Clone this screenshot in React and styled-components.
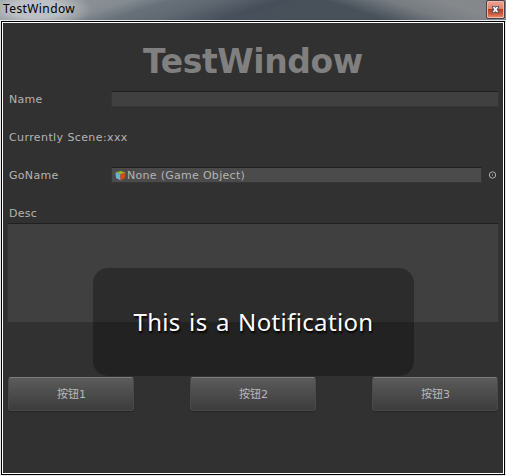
import React from 'react';
import styled, { createGlobalStyle } from 'styled-components';

const GlobalStyle = createGlobalStyle`
  * { box-sizing: border-box; }
  body { margin: 0; overflow: hidden; }
`;

const Window = styled.div`
  width: 506px;
  height: 476px;
  display: flex;
  flex-direction: column;
  background: #e4e7ec;
  font: 11px/16px "DejaVu Sans", "Noto Sans CJK SC", sans-serif;
  color: #b4b4b4;
`;

const TitleBar = styled.header`
  height: 20px;
  flex: none;
  display: flex;
  justify-content: space-between;
  background:
    radial-gradient(ellipse 56px 20px at 36px 9px, rgba(205, 208, 211, 0.75) 45%, rgba(170, 175, 180, 0) 100%),
    linear-gradient(162deg, #949a9f 0%, #858b91 23%, #68717a 30%, #606972 38%, #464f59 50%, rgba(70, 79, 89, 0) 54%),
    linear-gradient(18deg, #464f59 0%, #48515a 68%, #777c81 79%, #85898c 88%, #83878b 100%);
`;

const WindowName = styled.span`
  padding-left: 3px;
  font: 12px/18px "Noto Sans", sans-serif;
  letter-spacing: 0.4px;
  color: #000;
`;

const CloseButton = styled.button`
  width: 19px;
  height: 19px;
  margin-right: 1px;
  padding: 0;
  display: flex;
  align-items: center;
  justify-content: center;
  border: 1px solid #48424a;
  border-radius: 2px;
  box-shadow: inset 0 0 0 1px #f0b5a5;
  background: linear-gradient(#f0a594 0%, #df8069 47%, #bd3d20 50%, #ca583b 75%, #e99577 100%);
`;

const Frame = styled.div`
  flex: none;
  height: 454px;
  margin: 1px 1px 0;
  border: 1px solid #000;
`;

const Panel = styled.main`
  position: relative;
  height: 452px;
  padding: 0 4px;
  display: flex;
  flex-direction: column;
  border: 1px solid #fff;
  background: #313131;
`;

const Heading = styled.h1`
  margin: 19px 0 9px;
  height: 40px;
  font: bold 33px/40px "DejaVu Sans", sans-serif;
  letter-spacing: -0.4px;
  text-align: center;
  color: #808080;
`;

const Row = styled.div`
  height: 16px;
  margin-bottom: 22px;
  padding-left: 1px;
  display: flex;
  align-items: center;
  white-space: nowrap;
`;

const Label = styled.span`
  width: ${({ $wide }) => ($wide ? 'auto' : '103px')};
  padding: 2px 0 0 1px;
  letter-spacing: ${({ $spacing = 0.3 }) => $spacing}px;
`;

const Field = styled.div`
  flex: 1;
  height: 16px;
  display: flex;
  align-items: center;
  gap: 1px;
  padding-left: 3px;
  border: 1px solid #363636;
  border-top-color: #202020;
  background: ${({ $object }) => ($object ? '#4b4b4b' : '#404040')};
`;

const FieldText = styled.span`
  padding-top: 2px;
  letter-spacing: 0.29px;
`;

const Picker = styled.span`
  width: 17px;
  display: flex;
  justify-content: flex-end;
  padding-right: 2px;
`;

const TextArea = styled.div`
  flex: none;
  height: 99px;
  margin-top: -20px;
  border: 1px solid #363636;
  border-top-color: #202020;
  border-bottom-color: #404040;
  background: #404040;
`;

const Buttons = styled.div`
  display: flex;
  justify-content: space-between;
  margin-top: 55px;
  padding: 0 1px;
`;

const Button = styled.button`
  width: 126px;
  height: 34px;
  padding: 1px 0 0 1px;
  border: 1px solid #4b4b4b;
  border-top-color: #7c7c7c;
  border-bottom-color: #494949;
  border-radius: 3px;
  background: linear-gradient(#5b5b5b, #3c3c3c);
  box-shadow: 0 1px 1px #252525;
  font: 11px/16px "DejaVu Sans", "Noto Sans CJK SC", sans-serif;
  color: #b8b8b8;
`;

const Notification = styled.div`
  position: absolute;
  left: 90px;
  top: 245px;
  width: 321px;
  height: 108px;
  display: flex;
  align-items: center;
  justify-content: center;
  border-radius: 15px;
  background: rgba(0, 0, 0, 0.3);
  color: #fff;
  font: 24px/32px "Noto Sans", sans-serif;
  letter-spacing: 0.35px;
  word-spacing: 1.8px;
  white-space: nowrap;
  text-shadow: 1px 2px 2px #000;
`;

function CloseIcon() {
  return (
    <svg width="9" height="9" viewBox="0 0 9 9">
      <path d="M1 1H4L4.5 2L5 1H8V3L7 4.5L8 6V8H5L4.5 7L4 8H1V6L2 4.5L1 3Z" fill="#505168" />
      <path d="M2 2H3.5L4.5 3.5L5.5 2H7L5.5 4.5L7 7H5.5L4.5 5.5L3.5 7H2L3.5 4.5Z" fill="#fff" stroke="#fff" strokeWidth="0.4" />
    </svg>
  );
}

function CubeIcon() {
  return (
    <svg width="11" height="11" viewBox="0 0 11 11">
      <path d="M0.5 2.5L5.5 1L10.5 2.5L5.5 4.5Z" fill="#9ab32e" />
      <path d="M0.5 2.5L5.5 4.5V10.5L1 8Z" fill="#62b3dc" />
      <path d="M10.5 2.5L5.5 4.5V10.5L10 8Z" fill="#d44a13" />
    </svg>
  );
}

function TargetIcon() {
  return (
    <svg width="9" height="9" viewBox="0 0 9 9">
      <circle cx="4.5" cy="4" r="3.2" fill="none" stroke="#b0b0b0" />
      <rect x="4" y="3.5" width="1" height="1" fill="#ccc" />
    </svg>
  );
}

export default function App() {
  return (
    <>
      <GlobalStyle />
      <Window>
        <TitleBar>
          <WindowName>TestWindow</WindowName>
          <CloseButton aria-label="Close"><CloseIcon /></CloseButton>
        </TitleBar>
        <Frame>
          <Panel>
            <Heading>TestWindow</Heading>
            <Row><Label>Name</Label><Field /></Row>
            <Row><Label $wide $spacing={0.4}>Currently Scene:xxx</Label></Row>
            <Row>
              <Label>GoName</Label>
              <Field $object><CubeIcon /><FieldText>None (Game Object)</FieldText></Field>
              <Picker><TargetIcon /></Picker>
            </Row>
            <Row><Label>Desc</Label></Row>
            <TextArea />
            <Buttons>
              <Button>按钮1</Button>
              <Button>按钮2</Button>
              <Button>按钮3</Button>
            </Buttons>
            <Notification>This is a Notification</Notification>
          </Panel>
        </Frame>
      </Window>
    </>
  );
}
